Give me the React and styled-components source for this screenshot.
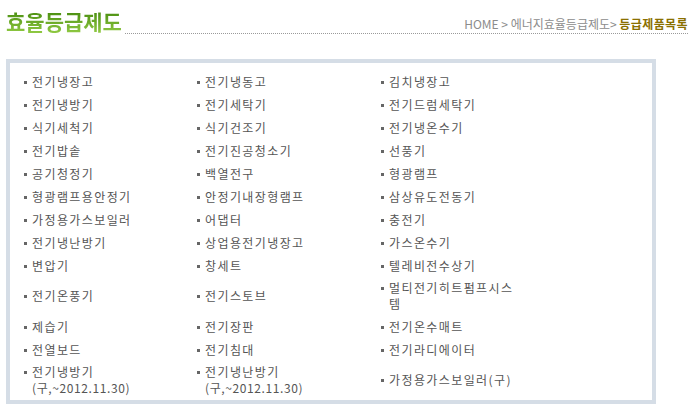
import React from "react";
import styled, { createGlobalStyle } from "styled-components";

const GlobalStyle = createGlobalStyle`
  body {
    margin: 0;
    background: #fff;
    font-family: "Noto Sans CJK KR", "Noto Sans", sans-serif;
  }
`;

const rows = [
  ["전기냉장고", "전기냉동고", "김치냉장고"],
  ["전기냉방기", "전기세탁기", "전기드럼세탁기"],
  ["식기세척기", "식기건조기", "전기냉온수기"],
  ["전기밥솥", "전기진공청소기", "선풍기"],
  ["공기청정기", "백열전구", "형광램프"],
  ["형광램프용안정기", "안정기내장형램프", "삼상유도전동기"],
  ["가정용가스보일러", "어댑터", "충전기"],
  ["전기냉난방기", "상업용전기냉장고", "가스온수기"],
  ["변압기", "창세트", "텔레비전수상기"],
  ["전기온풍기", "전기스토브", "멀티전기히트펌프시스템"],
  ["제습기", "전기장판", "전기온수매트"],
  ["전열보드", "전기침대", "전기라디에이터"],
  [["전기냉방기", "(구,~2012.11.30)"], ["전기냉난방기", "(구,~2012.11.30)"], "가정용가스보일러(구)"],
];

const App = () => {
  return (
    <>
      <GlobalStyle />
      <Page>
        <Header>
          <Title>효율등급제도</Title>
          <Rule>
            <Crumb>
              HOME &gt; 에너지효율등급제도&gt; <Current>등급제품목록</Current>
            </Crumb>
          </Rule>
        </Header>
        <Box>
          <List>
            {rows.map((row, i) =>
              row.map((name, j) => (
                <Item key={`${i}-${j}`} $tall={i === 9 || i === 12}>
                  <Entry>
                    <Bullet />
                    {Array.isArray(name) ? (
                      <Name>
                        {name[0]}
                        <Note>{name[1]}</Note>
                      </Name>
                    ) : (
                      <Name>{name}</Name>
                    )}
                  </Entry>
                </Item>
              ))
            )}
          </List>
        </Box>
      </Page>
    </>
  );
};

const Page = styled.div`
  width: 695px;
  padding: 0 7px 0 6px;
  box-sizing: border-box;
`;

const Header = styled.div`
  display: flex;
  align-items: flex-end;
  height: 34px;
`;

const Title = styled.h1`
  margin: 0;
  font-size: 21px;
  line-height: 26px;
  font-weight: 700;
  background: linear-gradient(#4f9214 20%, #93cc45);
  -webkit-background-clip: text;
  background-clip: text;
  color: transparent;
`;

const Rule = styled.div`
  flex: 1;
  margin-left: 3px;
  border-bottom: 1px dotted #9a9a9a;
  display: flex;
  justify-content: flex-end;
  padding-bottom: 2px;
`;

const Crumb = styled.span`
  font-size: 12px;
  line-height: 14px;
  color: #8c8c8c;
  letter-spacing: 0px;
`;

const Current = styled.span`
  color: #8a7000;
  font-weight: 700;
  letter-spacing: 0.4px;
`;

const Box = styled.div`
  margin-top: 25px;
  width: 650px;
  box-sizing: border-box;
  border: 4px solid #d5dde6;
  padding: 7px 0 1px 14px;
`;

const List = styled.div`
  display: grid;
  grid-template-columns: 173px 184px 135px;
`;

const Item = styled.div`
  display: flex;
  align-items: center;
  height: ${({ $tall }) => ($tall ? "38px" : "23px")};
`;

const Entry = styled.div`
  display: flex;
  align-items: flex-start;
`;

const Bullet = styled.span`
  flex: none;
  width: 3px;
  height: 3px;
  margin: 7px 5px 0 0;
  background: #666;
`;

const Name = styled.span`
  font-size: 12px;
  line-height: 16px;
  color: #555;
  word-break: break-all;
  letter-spacing: 1.4px;
`;

const Note = styled.span`
  display: block;
  letter-spacing: 0.6px;
`;

export default App;
